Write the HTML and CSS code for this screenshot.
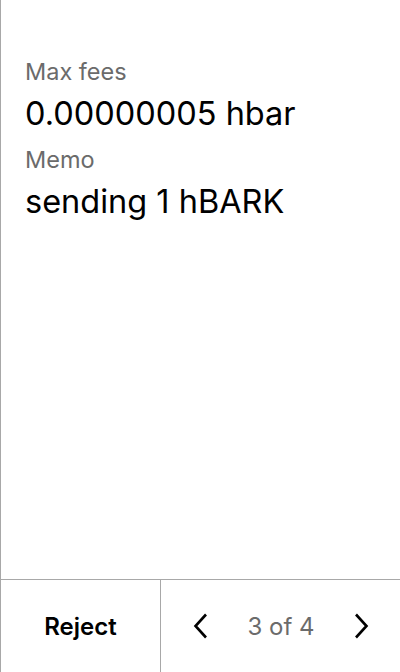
FILE: index.html
```html
<!DOCTYPE html>
<html>
<head>
<meta charset="utf-8">
<link rel="stylesheet" href="styles.css">
</head>
<body>
<div class="screen">
  <main class="content">
    <div class="field">
      <div class="label">Max fees</div>
      <div class="value">0.00000005 hbar</div>
    </div>
    <div class="field">
      <div class="label">Memo</div>
      <div class="value">sending 1 hBARK</div>
    </div>
  </main>
  <footer class="bar">
    <div class="reject">Reject</div>
    <div class="pager">
      <svg class="chev" width="16" height="26" viewBox="0 0 16 26"><path d="M13 1.5 L2.5 13 L13 24.5" fill="none" stroke="#000" stroke-width="2.6"/></svg>
      <span class="count">3 of 4</span>
      <svg class="chev" width="16" height="26" viewBox="0 0 16 26"><path d="M3 1.5 L13.5 13 L3 24.5" fill="none" stroke="#000" stroke-width="2.6"/></svg>
    </div>
  </footer>
</div>
</body>
</html>
```

FILE: styles.css
```css
html, body {
  margin: 0;
  padding: 0;
  background: #fff;
}
body {
  font-family: Inter, "Noto Sans", sans-serif;
}
.screen {
  width: 400px;
  height: 672px;
  box-sizing: border-box;
  border-left: 1px solid #a8a8a8;
  display: flex;
  flex-direction: column;
}
.content {
  flex: 1;
  padding: 56px 24px 0 24px;
  display: flex;
  flex-direction: column;
  gap: 10px;
}
.field {
  display: flex;
  flex-direction: column;
  gap: 6px;
}
.label {
  font-size: 23.5px;
  line-height: 32px;
  color: #6b6b6b;
}
.value {
  font-size: 32.5px;
  line-height: 40px;
  color: #000;
}
.bar {
  height: 92px;
  border-top: 1px solid #a8a8a8;
  display: flex;
}
.reject {
  width: 159px;
  border-right: 1px solid #a8a8a8;
  display: flex;
  align-items: center;
  justify-content: center;
  font-size: 24px;
  font-weight: 600;
  color: #000;
}
.pager {
  flex: 1;
  display: flex;
  align-items: center;
  justify-content: space-between;
  padding: 0 31px 0 32px;
}
.count {
  font-size: 24px;
  color: #6b6b6b;
}
.chev {
  display: block;
}
```
